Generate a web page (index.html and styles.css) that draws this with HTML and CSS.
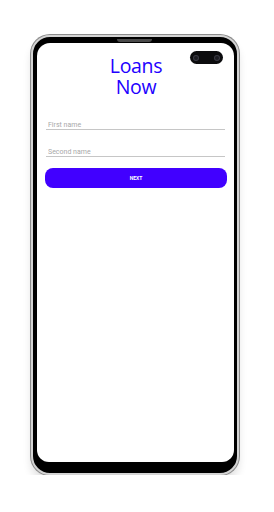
FILE: index.html
```html
<!DOCTYPE html>
<html lang="en">
    <head>
        <meta charset="UTF-8" />
        <meta name="viewport" content="width=device-width, initial-scale=1.0" />
        <title>Loans Now</title>
        <link rel="stylesheet" href="styles.css">
    </head>
    <body>
        <!-- 폰 프레임 -->
        <div class="phone">
            <div class="speaker"></div>
            <!-- 화면 -->
            <div class="screen">
                <!-- 카메라 -->
                <div class="cam">
                    <span class="lens"></span>
                    <span class="lens"></span>
                </div>
                <h1 class="tit">Loans<br />Now</h1>
                <input type="text" class="field first" placeholder="First name" />
                <input type="text" class="field" placeholder="Second name" />
                <button class="sbtn">NEXT</button>
            </div>
        </div>
    </body>
</html>
```

FILE: styles.css
```css
body {
    margin: 0;
    background: #fff;
    font-family: "Open Sans", "Liberation Sans", sans-serif;
}
/* 폰 프레임 */
.phone {
    position: relative;
    /* 부모자격 */
    box-sizing: border-box;
    width: 208px;
    height: 440px;
    margin: 35px 0 0 31px;
    padding: 6px 3px 11px 4px;
    border: 2px solid #d4d4d4;
    border-radius: 19px;
    background: #000;
    box-shadow: 0 0 0 1px #8c8c8c, 0 7px 8px rgba(0, 0, 0, 0.12);
}
.speaker {
    position: absolute;
    top: 2px;
    left: 84px;
    width: 35px;
    height: 3px;
    border-radius: 0 0 3px 3px;
    background: #4a4a4a;
}
/* 화면 */
.screen {
    position: relative;
    height: 100%;
    padding: 12px 8px 0 9px;
    box-sizing: border-box;
    background: #fff;
    border-radius: 13px 13px 12px 12px;
    display: flex;
    flex-direction: column;
}
.cam {
    position: absolute;
    top: 8px;
    left: 153px;
    width: 33px;
    height: 13px;
    border-radius: 7px;
    background: #0c0c0e;
    display: flex;
    align-items: center;
    justify-content: space-between;
    padding: 0 4px;
    box-sizing: border-box;
}
.lens {
    width: 4px;
    height: 4px;
    border-radius: 50%;
    background: #1c1c22;
    box-shadow: 0 0 0 1px #3a3a44;
}
.tit {
    margin: 0;
    font-family: "Open Sans", sans-serif;
    font-weight: 400;
    font-size: 19.5px;
    line-height: 21px;
    letter-spacing: -0.3px;
    text-align: center;
    color: #2200ff;
}
.field {
    display: block;
    height: 16px;
    margin: 11px 0 0;
    padding: 6px 0 0 2px;
    box-sizing: border-box;
    width: 179px;
    border: 0;
    border-bottom: 1px solid #c6c6c6;
    font-family: "Roboto", sans-serif;
    font-size: 7px;
    color: #333;
    outline: none;
}
.field.first {
    margin-top: 17px;
}
.field::placeholder {
    color: #a8a8a8;
}
.sbtn {
    height: 20px;
    margin: 11px -1px 0 -1px;
    border: 0;
    border-radius: 8px;
    background: #4100ff;
    color: #fff;
    font-family: "Roboto", sans-serif;
    font-weight: 700;
    font-size: 5px;
}
```
